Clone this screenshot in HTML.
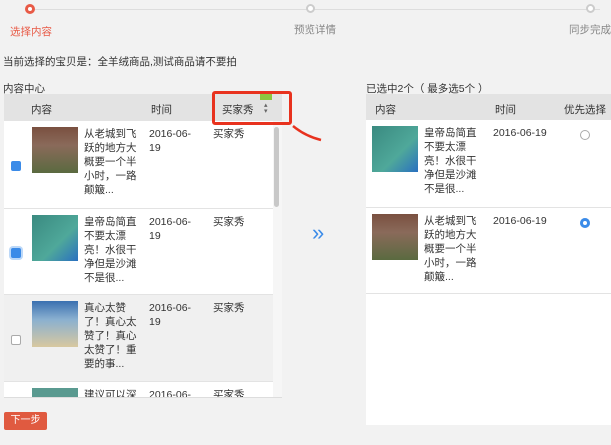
<!DOCTYPE html>
<html><head><meta charset="utf-8"><style>
*{margin:0;padding:0;box-sizing:border-box}
body{width:611px;height:445px;background:#f2f2f2;font-family:"Liberation Sans","Noto Sans CJK SC",sans-serif;font-size:10.5px;color:#333;position:relative;overflow:hidden}
.a{position:absolute}
.nw{white-space:nowrap}
.dot{position:absolute;width:10px;height:10px;border-radius:50%;border:2px solid #ccc;background:#fff;top:4px}
.hd{background:#e3e3e3;height:27px}
.hd span{position:absolute;top:8px;font-size:10.5px;white-space:nowrap}
.row{position:absolute;left:0;right:0;border-bottom:1px solid #e3e3e3;background:#fff}
.img{position:absolute;width:46px;height:46px;top:6px}
.txt{position:absolute;top:6px;width:54px;line-height:14px;font-size:10.5px;white-space:normal;word-break:break-all}
.dt{position:absolute;top:6px;line-height:14px;font-size:10.5px;white-space:nowrap}
.cb{position:absolute;width:10px;height:10px;border-radius:2px}
</style></head><body>
<div class="a" style="left:30px;top:9px;width:570px;height:1px;background:#ddd"></div>
<div class="dot" style="left:25px;border:3px solid #e85a46"></div>
<div class="dot" style="left:306px;width:9px;height:9px"></div>
<div class="dot" style="left:586px;width:9px;height:9px"></div>
<div class="a nw" style="left:10px;top:24px;color:#e85a46">选择内容</div>
<div class="a nw" style="left:294px;top:22px;color:#888">预览详情</div>
<div class="a nw" style="left:569px;top:22px;color:#888">同步完成</div>
<div class="a nw" style="left:3px;top:54px">当前选择的宝贝是：全羊绒商品,测试商品请不要拍</div>
<div class="a nw" style="left:3px;top:81px">内容中心</div>
<div class="a nw" style="left:366px;top:81px">已选中2个（ 最多选5个 ）</div>

<div class="a" style="left:4px;top:94px;width:278px;height:304px;background:#fff;overflow:hidden;border-bottom:1px solid #ddd">
 <div class="hd"><span style="left:27px">内容</span><span style="left:147px">时间</span><span style="left:218px">买家秀</span>
 <span style="left:260px;top:7px;font-size:7px;color:#666">▴</span><span style="left:260px;top:13px;font-size:7px;color:#666">▾</span>
 <div class="a" style="left:256px;top:0px;width:12px;height:6px;background:#8dc63f"></div></div>
 <div class="a" style="left:269px;top:27px;width:9px;height:277px;background:#f6f6f6"></div>
 <div class="a" style="left:270px;top:33px;width:5px;height:80px;background:#c8c8c8;border-radius:3px"></div>
 <div class="row" style="top:27px;height:88px;right:9px">
  <div class="cb" style="left:7px;top:40px;background:#3b8be8"></div>
  <div class="img" style="left:28px;background:linear-gradient(#7a5040,#8a6a5a 40%,#5a6a40)"></div>
  <div class="txt" style="left:80px">从老城到飞跃的地方大概要一个半小时，一路颠簸...</div>
  <div class="dt" style="left:145px">2016-06-<br>19</div><div class="dt" style="left:209px">买家秀</div></div>
 <div class="row" style="top:115px;height:86px;right:9px">
  <div class="cb" style="left:7px;top:39px;background:#3b8be8;box-shadow:0 0 0 2px #bcd8f8"></div>
  <div class="img" style="left:28px;background:linear-gradient(135deg,#3a8a80,#4fa89a 60%,#2a70c0)"></div>
  <div class="txt" style="left:80px">皇帝岛简直不要太漂亮！水很干净但是沙滩不是很...</div>
  <div class="dt" style="left:145px">2016-06-<br>19</div><div class="dt" style="left:209px">买家秀</div></div>
 <div class="row" style="top:201px;height:87px;right:9px;background:#f0f0f0">
  <div class="cb" style="left:7px;top:40px;background:#fff;border:1px solid #aaa"></div>
  <div class="img" style="left:28px;background:linear-gradient(#3a70b0,#8ab0d0 40%,#d8c8a0)"></div>
  <div class="txt" style="left:80px">真心太赞了！真心太赞了！真心太赞了！重要的事...</div>
  <div class="dt" style="left:145px">2016-06-<br>19</div><div class="dt" style="left:209px">买家秀</div></div>
 <div class="row" style="top:288px;height:40px;right:9px">
  <div class="img" style="left:28px;background:#5a9a90"></div>
  <div class="txt" style="left:80px">建议可以深</div>
  <div class="dt" style="left:145px">2016-06-</div><div class="dt" style="left:209px">买家秀</div></div>
</div>

<div class="a" style="left:212px;top:91px;width:80px;height:34px;border:3px solid #e8321e;border-radius:3px"></div>
<svg class="a" style="left:285px;top:120px" width="45" height="30"><path d="M8 6 Q20 16 36 20" stroke="#e8321e" stroke-width="2.5" fill="none"/></svg>
<div class="a" style="left:312px;top:222px;color:#3b8be8;font-size:22px;line-height:22px">»</div>

<div class="a" style="left:366px;top:94px;width:245px;height:331px;background:#fff">
 <div class="hd" style="height:26px"><span style="left:9px">内容</span><span style="left:129px">时间</span><span style="left:198px">优先选择</span></div>
 <div class="row" style="top:26px;height:88px">
  <div class="img" style="left:6px;background:linear-gradient(135deg,#3a8a80,#4fa89a 60%,#2a70c0)"></div>
  <div class="txt" style="left:58px">皇帝岛简直不要太漂亮！水很干净但是沙滩不是很...</div>
  <div class="dt" style="left:127px">2016-06-19</div>
  <div class="cb" style="left:214px;top:10px;border-radius:50%;border:1px solid #aaa"></div></div>
 <div class="row" style="top:114px;height:86px">
  <div class="img" style="left:6px;background:linear-gradient(#7a5040,#8a6a5a 40%,#5a6a40)"></div>
  <div class="txt" style="left:58px">从老城到飞跃的地方大概要一个半小时，一路颠簸...</div>
  <div class="dt" style="left:127px">2016-06-19</div>
  <div class="cb" style="left:214px;top:10px;border-radius:50%;background:#3b8be8;box-shadow:inset 0 0 0 3px #3b8be8,inset 0 0 0 5px #fff"></div></div>
</div>

<div class="a nw" style="left:4px;top:412px;width:43px;height:18px;background:#e05a40;color:#fff;border-radius:2px;text-align:center;line-height:18px;font-size:10px">下一步</div>
</body></html>
